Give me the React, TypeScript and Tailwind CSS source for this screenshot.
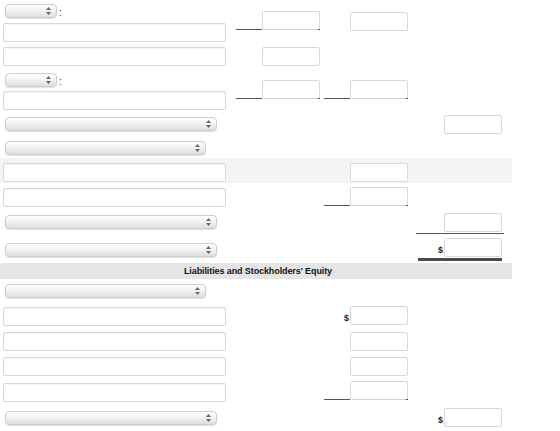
import React from "react";

const FONT = { fontFamily: '"Liberation Sans", Arial, sans-serif' };

function Arrows() {
  return (
    <svg width="5" height="8" viewBox="0 0 5 8" className="block">
      <path d="M2.5 0 L5 3 L0 3 Z" fill="#666" />
      <path d="M2.5 8 L5 5 L0 5 Z" fill="#666" />
    </svg>
  );
}

function Select({ w }: { w: string }) {
  return (
    <div
      className={`${w} h-[14px] ml-[2px] rounded-[4px] border border-[#cdcdcd] bg-gradient-to-b from-[#fefefe] via-[#f1f1f1] to-[#dedede] shadow-[0_1px_1px_rgba(0,0,0,0.12)] flex items-center justify-end pr-[5px]`}
    >
      <Arrows />
    </div>
  );
}

function TextInput() {
  return (
    <div className="w-[223px] h-[19px] border border-[#d8d8d8] rounded-[2px] bg-white shadow-[inset_0_1px_1px_rgba(0,0,0,0.04)]" />
  );
}

function Box({ under }: { under?: boolean }) {
  return (
    <div
      className={`w-[58px] h-[19px] border border-[#d8d8d8] rounded-[2px] bg-white ${
        under ? "border-b-[#d0d0d0]" : ""
      }`}
    />
  );
}

function Ruled() {
  return (
    <div className="flex items-end">
      <div className="w-[26px] h-[1px] bg-[#555]" />
      <div className="relative">
        <Box under />
        <div className="absolute left-[56px] bottom-0 w-[2px] h-[1px] bg-[#555]" />
      </div>
    </div>
  );
}

function Dollar() {
  return (
    <span className="text-[9px] font-bold text-[#222] leading-none mr-[1px] mb-[2px]">$</span>
  );
}

function Row({
  h,
  bg,
  left,
  c2,
  c3,
  c4,
}: {
  h: string;
  bg?: string;
  left?: React.ReactNode;
  c2?: React.ReactNode;
  c3?: React.ReactNode;
  c4?: React.ReactNode;
}) {
  return (
    <div className={`flex ${h} ${bg ?? ""}`}>
      <div className="w-[232px] pl-[3px]">{left}</div>
      <div className="w-[90px] pr-[2px] flex justify-end items-start">{c2}</div>
      <div className="w-[90px] pr-[4px] flex justify-end items-start">{c3}</div>
      <div className="w-[100px] flex justify-end items-start">{c4}</div>
    </div>
  );
}

export default function App() {
  return (
    <div className="w-[560px] h-[431px] bg-white overflow-hidden" style={FONT}>
      <div className="w-[512px]">
        <Row
          h="h-[44px]"
          left={
            <div className="pt-[4px] flex flex-col gap-[5px]">
              <div className="flex items-end">
                <Select w="w-[52px]" />
                <span className="text-[10px] leading-none text-[#333] ml-[2px]">:</span>
              </div>
              <TextInput />
            </div>
          }
          c2={<div className="pt-[11px]"><Ruled /></div>}
          c3={<div className="pt-[12px]"><Box /></div>}
        />
        <Row
          h="h-[25px]"
          left={<div className="pt-[3px]"><TextInput /></div>}
          c2={<div className="pt-[3px]"><Box /></div>}
        />
        <Row
          h="h-[44px]"
          left={
            <div className="pt-[4px] flex flex-col gap-[4px]">
              <div className="flex items-end">
                <Select w="w-[52px]" />
                <span className="text-[10px] leading-none text-[#333] ml-[2px]">:</span>
              </div>
              <TextInput />
            </div>
          }
          c2={<div className="pt-[11px]"><Ruled /></div>}
          c3={<div className="pt-[11px]"><Ruled /></div>}
        />
        <Row
          h="h-[24px]"
          left={<div className="pt-[4px]"><Select w="w-[212px]" /></div>}
          c4={<div className="pt-[2px] pr-[10px]"><Box /></div>}
        />
        <Row
          h="h-[21px]"
          left={<div className="pt-[4px]"><Select w="w-[201px]" /></div>}
        />
        <Row
          h="h-[25px]"
          bg="bg-[#f4f4f4]"
          left={<div className="pt-[5px]"><TextInput /></div>}
          c3={<div className="pt-[5px]"><Box /></div>}
        />
        <Row
          h="h-[27px]"
          left={<div className="pt-[5px]"><TextInput /></div>}
          c3={<div className="pt-[4px]"><Ruled /></div>}
        />
        <Row
          h="h-[28px]"
          left={<div className="pt-[5px]"><Select w="w-[212px]" /></div>}
          c4={
            <div className="pt-[3px] pr-[8px]">
              <div className="border-b border-[#555] pl-[28px] pr-[2px] pb-[1px]">
                <Box />
              </div>
            </div>
          }
        />
        <Row
          h="h-[25px]"
          left={<div className="pt-[5px]"><Select w="w-[212px]" /></div>}
          c4={
            <div className="pr-[10px]">
              <div className="border-b-[3px] border-[#4a4a4a] pl-[20px] pb-[1px] flex items-end">
                <Dollar />
                <Box />
              </div>
            </div>
          }
        />
        <div className="h-[16px] bg-[#e5e5e5] flex items-center justify-center">
          <span className="text-[9px] font-bold text-[#111] leading-none tracking-[-0.1px] ml-[4px]">
            Liabilities and Stockholders' Equity
          </span>
        </div>
        <Row
          h="h-[24px]"
          left={<div className="pt-[5px]"><Select w="w-[201px]" /></div>}
        />
        <Row
          h="h-[26px]"
          left={<div className="pt-[4px]"><TextInput /></div>}
          c3={
            <div className="pt-[3px] flex items-end">
              <Dollar />
              <Box />
            </div>
          }
        />
        <Row
          h="h-[25px]"
          left={<div className="pt-[3px]"><TextInput /></div>}
          c3={<div className="pt-[3px]"><Box /></div>}
        />
        <Row
          h="h-[26px]"
          left={<div className="pt-[3px]"><TextInput /></div>}
          c3={<div className="pt-[3px]"><Box /></div>}
        />
        <Row
          h="h-[25px]"
          left={<div className="pt-[3px]"><TextInput /></div>}
          c3={<div className="pt-[1px]"><Ruled /></div>}
        />
        <Row
          h="h-[26px]"
          left={<div className="pt-[6px]"><Select w="w-[212px]" /></div>}
          c4={
            <div className="pt-[3px] pr-[10px] flex items-end">
              <Dollar />
              <Box />
            </div>
          }
        />
      </div>
    </div>
  );
}
